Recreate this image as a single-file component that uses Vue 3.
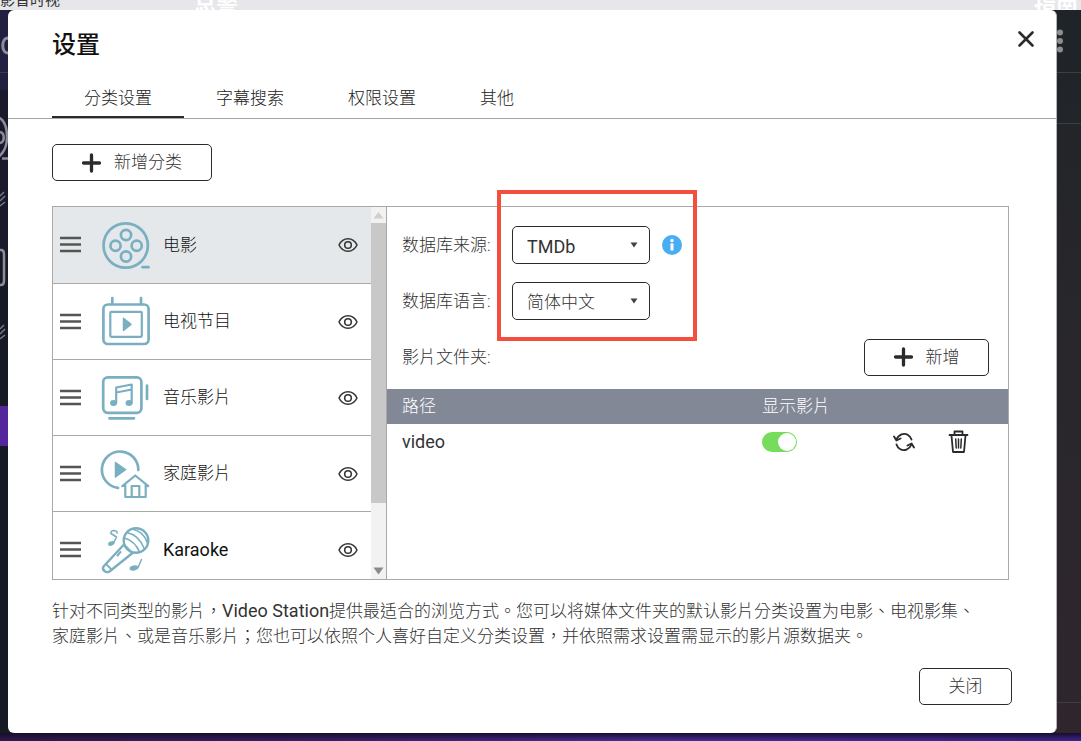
<script setup>
import { ref } from 'vue'

const tabs = ['分类设置', '字幕搜索', '权限设置', '其他']
const activeTab = ref(0)

const categories = [
  { id: 'movie', name: '电影' },
  { id: 'tv', name: '电视节目' },
  { id: 'music', name: '音乐影片' },
  { id: 'home', name: '家庭影片' },
  { id: 'karaoke', name: 'Karaoke', latin: true },
]
const activeCategory = ref('movie')

const source = ref('TMDb')
const language = ref('简体中文')
const folders = ref([{ path: 'video', visible: true }])
</script>

<template>
  <div class="page">
    <div class="backdrop" aria-hidden="true">
      <div class="strip">
        <span class="strip-title">影音时视</span>
        <span class="strip-word">总警</span>
        <span class="strip-word strip-end">指南</span>
      </div>
      <svg class="edge" width="8" height="731" viewBox="0 10 8 731">
        <rect y="10" width="8" height="731" fill="#1a1a2c" />
        <rect y="10" width="8" height="80" fill="#222040" />
        <rect y="250" width="8" height="491" fill="#161a24" />
        <path d="M0 72.500H8" stroke="#3a3a50" />
        <g fill="none" stroke="#8d8d9a" stroke-width="2.500">
          <path d="M8 38C1 38 1 53 8 53" stroke-width="3" />
          <path d="M-3 117C4 119 7 126 7 137S3 154 -3 158M0 132C5 133 5 142 0 143M2 158.500H8" />
          <path d="M-2 250H1Q4 250 4 254V281Q4 285 1 285H-2" />
        </g>
        <path d="M0 196L4 192M0 201L5 196M0 206L5 202M0 329L4 325M0 334L5 329M0 339L5 335" stroke="#77778a" stroke-width="1.500" />
        <rect y="406" width="8" height="40" fill="#53269c" />
      </svg>
      <div class="side">
        <svg width="25" height="731" viewBox="1056 10 25 731">
          <g fill="#8c8e90"><circle cx="1060" cy="32.500" r="3" /><circle cx="1060" cy="41" r="3" /><circle cx="1060" cy="49.500" r="3" /></g>
          <path d="M1056 72.500H1081M1056 123.500H1081M1056 702.500H1081" stroke="#3d4043" />
        </svg>
      </div>
      <div class="glow"></div>
    </div>

    <section class="dialog" role="dialog" aria-labelledby="dialog-title">
      <header class="head">
        <h1 id="dialog-title">设置</h1>
        <button class="icon-btn" aria-label="关闭设置">
          <svg width="18" height="18" viewBox="0 0 18 18"><path d="M2.500 2.500L15.500 15.500M15.500 2.500L2.500 15.500" stroke="#2b2b2b" stroke-width="2.600" stroke-linecap="round" /></svg>
        </button>
      </header>

      <nav class="tabs" role="tablist">
        <button
          v-for="(tab, i) in tabs"
          :key="tab"
          class="tab"
          :class="{ active: i === activeTab }"
          role="tab"
          :aria-selected="i === activeTab"
          @click="activeTab = i"
        >{{ tab }}</button>
      </nav>

      <div class="body">
        <button class="btn add-category">
          <svg width="20" height="20" viewBox="0 0 20 20"><path d="M9.500 2V18M1.500 10H17.500" stroke="#2b2b2b" stroke-width="3.300" stroke-linecap="round" /></svg>
          新增分类
        </button>

        <div class="panel">
          <div class="list-wrap">
            <ul class="list">
              <li
                v-for="c in categories"
                :key="c.id"
                class="row"
                :class="{ selected: c.id === activeCategory }"
                @click="activeCategory = c.id"
              >
                <svg class="grip" width="22" height="18" viewBox="0 0 22 18"><path d="M0 2H21M0 8.500H21M0 15H21" stroke="#555" stroke-width="2.300" /></svg>
                <svg class="art" width="52" height="52" viewBox="0 0 52 52" fill="none" stroke="#7aafc2" stroke-width="2.700" stroke-linecap="round" stroke-linejoin="round">
                  <g v-if="c.id === 'movie'">
                    <circle cx="25.700" cy="26.500" r="22.200" />
                    <circle cx="26" cy="16" r="5.100" /><circle cx="15.500" cy="26.700" r="5.100" />
                    <circle cx="36.700" cy="26.700" r="5.100" /><circle cx="26" cy="37.500" r="5.100" />
                    <path d="M42.500 48.200H48.500" />
                  </g>
                  <g v-else-if="c.id === 'tv'">
                    <rect x="3.400" y="8.500" width="45.200" height="39.500" rx="4.500" />
                    <rect x="10.300" y="15.800" width="31.500" height="25" rx="1" stroke-width="2.200" />
                    <path d="M12.300 2V8M41 2V8" />
                    <path d="M23.500 22.300V34.500L31 28.400Z" fill="#7aafc2" stroke-width="1.500" />
                  </g>
                  <g v-else-if="c.id === 'music'">
                    <rect x="3.200" y="5.300" width="38.200" height="35.500" rx="4.500" />
                    <path d="M47 13.500V27M9.500 46.300H34" />
                    <path d="M16.200 31V15.500L31.700 12.500V31M16.200 20.500L31.700 17.500" stroke-width="2.200" />
                    <ellipse cx="13.500" cy="31" rx="3.500" ry="3" fill="#7aafc2" stroke="none" />
                    <ellipse cx="29" cy="31" rx="3.500" ry="3" fill="#7aafc2" stroke="none" />
                  </g>
                  <g v-else-if="c.id === 'home'">
                    <path d="M38.300 22A18.200 18.200 0 1 0 18 39.800" />
                    <path d="M15.500 14.500V29L25.500 21.700Z" fill="#7aafc2" stroke-width="1.500" />
                    <path d="M22.300 38.200L35.300 27.500L48.300 38.200M25.300 36.500V49H45.700V36.500M31.700 48.500V38H39.300V48.500" stroke-width="2.200" />
                  </g>
                  <g v-else stroke-width="2.400">
                    <circle cx="36" cy="16.500" r="12.300" />
                    <path d="M24 20.500L3.500 42.500Q2 45 4.500 47Q7 49 9.500 47.500L32.500 29" />
                    <path d="M24 20.500L32.500 29M6 40L11.500 45.500" stroke-width="1.800" />
                    <path d="M27 8.500Q39 11 44.500 25M32 5Q44 7.500 47.500 19M24.500 14Q35 17 39.500 28" stroke-width="1.700" />
                    <path d="M20.500 28L17.500 31.500" stroke-width="2" />
                    <path d="M13.500 19L16.500 13L11 9.500Q10.500 6.500 14 6.500Q17.500 7 17 9" stroke-width="1.600" />
                    <ellipse cx="11.300" cy="19.500" rx="3.300" ry="2.200" fill="#7aafc2" stroke="none" transform="rotate(-20 11.300 19.500)" />
                    <path d="M38 43.500L41.500 35.500" stroke-width="1.500" />
                    <ellipse cx="34" cy="44" rx="4.500" ry="2.500" fill="#7aafc2" stroke="none" transform="rotate(-12 34 44)" />
                  </g>
                </svg>
                <span class="name" :class="{ latin: c.latin }">{{ c.name }}</span>
                <button class="icon-btn eye" :aria-label="'显示 ' + c.name">
                  <svg width="20" height="16" viewBox="0 0 20 16" fill="none" stroke="#333"><path d="M1 8C5 -0.300 15 -0.300 19 8C15 16.300 5 16.300 1 8Z" stroke-width="1.500" /><circle cx="10" cy="8" r="3.300" stroke-width="1.500" /></svg>
                </button>
              </li>
            </ul>
            <div class="scrollbar" aria-hidden="true">
              <svg width="15" height="16" viewBox="0 0 15 16"><path d="M2.500 11.500L7.500 5L12.500 11.500Z" fill="#cfcfcf" /></svg>
              <div class="track"><div class="thumb"></div></div>
              <svg width="15" height="16" viewBox="0 0 15 16"><path d="M2.500 4.500L7.500 11.500L12.500 4.500Z" fill="#8a8a8a" /></svg>
            </div>
          </div>

          <div class="detail">
            <div class="field">
              <label for="source">数据库来源:</label>
              <span class="select">
                <select id="source" v-model="source" class="latin"><option>TMDb</option></select>
                <svg width="8" height="6" viewBox="0 0 8 6"><path d="M0.500 0.500H7.500L4 5.500Z" fill="#444" /></svg>
              </span>
              <svg class="info" width="20" height="20" viewBox="0 0 20 20"><circle cx="10" cy="10" r="10" fill="#48adf3" /><path d="M10 8.300V15.500" stroke="#fff" stroke-width="3" /><circle cx="10" cy="5.500" r="1.700" fill="#fff" /></svg>
            </div>
            <div class="field">
              <label for="language">数据库语言:</label>
              <span class="select">
                <select id="language" v-model="language"><option>简体中文</option></select>
                <svg width="8" height="6" viewBox="0 0 8 6"><path d="M0.500 0.500H7.500L4 5.500Z" fill="#444" /></svg>
              </span>
            </div>
            <div class="field">
              <span class="label">影片文件夹:</span>
              <button class="btn add-folder">
                <svg width="20" height="20" viewBox="0 0 20 20"><path d="M9.500 2V18M1.500 10H17.500" stroke="#2b2b2b" stroke-width="3.300" stroke-linecap="round" /></svg>
                新增
              </button>
            </div>

            <table class="folders">
              <colgroup><col /><col class="col-show" /><col class="col-act" /></colgroup>
              <thead>
                <tr><th>路径</th><th>显示影片</th><th></th></tr>
              </thead>
              <tbody>
                <tr v-for="f in folders" :key="f.path">
                  <td class="latin">{{ f.path }}</td>
                  <td><input v-model="f.visible" class="toggle" type="checkbox" aria-label="显示影片" /></td>
                  <td>
                    <div class="actions">
                      <button class="icon-btn" aria-label="重新扫描">
                        <svg width="24" height="22" viewBox="0 0 24 22" fill="none" stroke="#2b2b2b" stroke-width="1.900" stroke-linecap="round" stroke-linejoin="round">
                          <path d="M4.500 8.500C6.500 3.500 12 1.500 16 4Q18.500 5.500 19.500 8.500M19.500 13.500C17.500 18.500 12 20.500 8 18Q5.500 16.500 4.500 13.500" />
                          <path d="M2 5.500L4.500 9.500L8.500 7.500M22 16.500L19.500 12.500L15.500 14.500" />
                        </svg>
                      </button>
                      <button class="icon-btn" aria-label="删除">
                        <svg width="22" height="24" viewBox="0 0 22 24" fill="none" stroke="#2b2b2b" stroke-width="1.800" stroke-linecap="round" stroke-linejoin="round">
                          <path d="M1.500 5H19.500M6.500 4.500V1.500H14.500V4.500M3.500 5.500L5 22H16L17.500 5.500" />
                          <path d="M7.700 9L8.200 18M10.500 9V18M13.300 9L12.800 18" stroke-width="1.500" />
                        </svg>
                      </button>
                    </div>
                  </td>
                </tr>
              </tbody>
            </table>

            <div class="highlight" aria-hidden="true"></div>
          </div>
        </div>

        <p class="note">
          针对不同类型的影片，<span class="latin">Video Station</span>提供最适合的浏览方式。您可以将媒体文件夹的默认影片分类设置为电影、电视影集、<br />家庭影片、或是音乐影片；您也可以依照个人喜好自定义分类设置，并依照需求设置需显示的影片源数据夹。
        </p>

        <footer class="foot">
          <button class="btn close">关闭</button>
        </footer>
      </div>
    </section>
  </div>
</template>

<style>
body {
  background: #1b1b28;
}
</style>

<style scoped>
* {
  box-sizing: border-box;
}
.page {
  position: relative;
  min-height: 100vh;
  padding: 10px 24px 8px 8px;
  overflow: hidden;
  color: #333;
  font-family: Roboto, "Noto Sans CJK TC", sans-serif;
  font-size: 17px;
  font-weight: 300;
  line-height: 25px;
}
button,
select {
  padding: 0;
  border: 0;
  background: none;
  color: inherit;
  font: inherit;
}
svg {
  display: block;
  flex: none;
}
.latin {
  font-size: 18px;
  font-weight: 400;
}

.backdrop {
  position: absolute;
  inset: 0;
  overflow: hidden;
}
.strip {
  display: flex;
  height: 10px;
  align-items: flex-end;
  overflow: hidden;
  background: #e7e7eb;
  line-height: 10px;
}
.strip-title {
  flex: none;
  width: 194px;
  padding-bottom: 5px;
  color: #333;
  font-size: 15px;
  font-weight: 400;
}
.strip-word {
  color: #fff;
  font-size: 22px;
  font-weight: 700;
}
.strip-end {
  margin-left: auto;
  padding-right: 3px;
}
.edge {
  position: absolute;
  top: 10px;
  left: 0;
}
.side {
  position: absolute;
  top: 10px;
  right: 0;
  bottom: 0;
  background: linear-gradient(#1e2428, #26262a 30%, #2a272c 60%, #2f262d);
}
.glow {
  position: absolute;
  right: 0;
  bottom: 0;
  left: 0;
  height: 8px;
  background: linear-gradient(#160e2a, transparent), linear-gradient(90deg, #33184e, #3b1d6a 30%, #4c2d9c 60%, #3e2591);
}

.dialog {
  position: relative;
  min-height: calc(100vh - 18px);
  border-right: 1px solid #b5b5b5;
  border-radius: 6px;
  background: #fff;
}
.head {
  display: flex;
  align-items: flex-start;
  justify-content: space-between;
  height: 68px;
  padding: 18px 21px 0 44px;
}
h1 {
  margin: 0;
  color: #111;
  font-size: 24px;
  font-weight: 500;
  line-height: 34px;
}
.icon-btn {
  display: flex;
  cursor: pointer;
}
.head .icon-btn {
  margin-top: 2px;
}
.tabs {
  display: flex;
  height: 41px;
  padding-left: 44px;
  border-bottom: 1px solid #a5a5a5;
}
.tab {
  height: 40px;
  padding: 2px 32px 0;
  border-bottom: 2px solid transparent;
  color: #222;
}
.tab.active {
  border-bottom-color: #2b2b2b;
}

.body {
  padding: 25px 44px 28px;
}
.btn {
  display: flex;
  align-items: center;
  justify-content: center;
  gap: 12px;
  height: 37px;
  border: 1px solid #2b2b2b;
  border-radius: 5px;
  background: #fff;
}
.add-category {
  width: 160px;
}
.add-folder {
  width: 125px;
  margin-left: auto;
}
.close {
  width: 93px;
}

.panel {
  display: flex;
  height: 374px;
  margin: 25px 3px 0 0;
  border: 1px solid #a9a9a9;
}
.list-wrap {
  display: flex;
  flex: none;
  width: 334px;
  overflow: hidden;
  border-right: 1px solid #a9a9a9;
}
.list {
  flex: 1;
  margin: 0;
  padding: 0;
  list-style: none;
}
.row {
  display: flex;
  align-items: center;
  height: 76px;
  padding: 0 13px 0 7px;
  border-bottom: 1px solid #a9a9a9;
}
.row.selected {
  height: 77px;
  background: #e4e8ea;
}
.art {
  margin-left: 18px;
}
.name {
  margin-left: 11px;
  color: #111;
}
.eye {
  margin-left: auto;
}
.scrollbar {
  display: flex;
  flex-direction: column;
  width: 15px;
  background: #f2f2f2;
}
.track {
  flex: 1;
}
.thumb {
  height: 280px;
  background: #c8c8c8;
}

.detail {
  position: relative;
  flex: 1;
  padding-top: 19px;
}
.field {
  display: flex;
  align-items: center;
  height: 38px;
  margin-bottom: 18px;
  padding: 0 19px 0 15px;
}
.field label {
  width: 110px;
}
.select {
  display: grid;
  align-items: center;
  width: 138px;
}
.select > * {
  grid-area: 1 / 1;
}
.select > svg {
  justify-self: end;
  margin-right: 12px;
  pointer-events: none;
}
select {
  width: 100%;
  height: 38px;
  padding: 3px 14px 0;
  appearance: none;
  border: 1px solid #2b2b2b;
  border-radius: 5px;
  background: #fff;
}
.info {
  margin-left: 12px;
}
.folders {
  width: 100%;
  margin-top: -5px;
  table-layout: fixed;
  border-collapse: collapse;
}
.col-show {
  width: 130px;
}
.col-act {
  width: 116px;
}
th,
td {
  height: 35px;
  padding: 0;
  text-align: left;
}
th {
  background: #828896;
  color: #fff;
  font-weight: inherit;
}
th:first-child,
td:first-child {
  padding-left: 15px;
}
.toggle {
  display: block;
  width: 35px;
  height: 20px;
  margin: 0;
  padding: 1px;
  appearance: none;
  border-radius: 10px;
  background: #bbb;
}
.toggle::before {
  display: block;
  width: 18px;
  height: 18px;
  border-radius: 50%;
  background: #fff;
  content: "";
}
.toggle:checked {
  background: #76dc5c;
}
.toggle:checked::before {
  margin-left: auto;
}
.actions {
  display: flex;
  align-items: center;
  gap: 32px;
}
.highlight {
  position: absolute;
  top: -17px;
  left: 110px;
  width: 200px;
  height: 151px;
  border: 4px solid #f44f3e;
  pointer-events: none;
}

.note {
  margin: 18px 0 0;
}
.foot {
  display: flex;
  justify-content: flex-end;
  margin-top: 19px;
}
</style>
